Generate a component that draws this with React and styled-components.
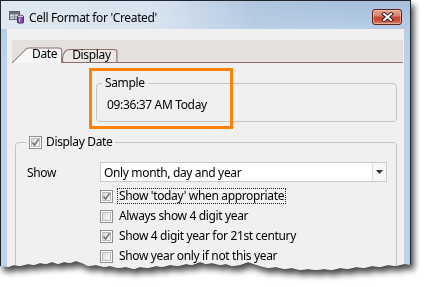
import React from 'react';
import styled, { createGlobalStyle } from 'styled-components';

const FONT = `"Noto Sans", "Open Sans", sans-serif`;

const Global = createGlobalStyle`
  html, body { margin: 0; padding: 0; background: #fff; }
  body { font-family: ${FONT}; font-size: 12px; color: #111; letter-spacing: -0.35px; }
`;

const Stage = styled.div`
  width: 426px;
  height: 287px;
  overflow: hidden;
  background: #fff;
`;

const Shadow = styled.div`
  width: 411px;
  filter: drop-shadow(3px 5px 3px rgba(0, 0, 0, 0.72));
`;

const TORN = [
  [0, 266], [8, 267], [14, 265], [20, 266], [28, 264], [34, 265], [40, 263], [46, 264],
  [52, 262], [58, 264], [64, 262], [70, 263], [76, 261], [82, 263], [88, 266], [96, 265],
  [104, 267], [110, 266], [118, 268], [126, 267], [134, 269], [140, 267], [148, 268],
  [156, 266], [162, 267], [170, 265], [178, 266], [186, 264], [192, 265], [200, 262],
  [206, 264], [212, 263], [220, 265], [226, 264], [232, 266], [240, 265], [248, 262],
  [254, 264], [260, 266], [268, 268], [276, 267], [284, 269], [292, 268], [300, 270],
  [308, 269], [316, 270], [324, 269], [332, 270], [340, 268], [348, 269], [356, 267],
  [364, 268], [372, 266], [380, 267], [388, 265], [396, 266], [404, 264], [411, 265],
];
const tornPath = `polygon(0 0, 411px 0, ${TORN.slice().reverse().map(([x, y]) => `${x}px ${y}px`).join(', ')})`;

const Frame = styled.div`
  height: 272px;
  box-sizing: border-box;
  border: 1px solid #1f262f;
  background: linear-gradient(180deg, #a6bfdb 0px, #b7cde6 28px, #bdd2ea 60px, #bed3eb 100%);
  display: flex;
  flex-direction: column;
`;

const TitleBar = styled.div`
  height: 28px;
  box-sizing: border-box;
  padding: 4px 8px 0 8px;
  display: flex;
  align-items: center;
  background: linear-gradient(90deg, rgba(226, 234, 243, 0.95) 0%, rgba(220, 230, 241, 0.9) 38%, rgba(190, 208, 228, 0.4) 62%, rgba(160, 188, 218, 0) 85%);
`;

const TitleIcon = styled.svg`
  width: 16px;
  height: 14px;
  flex: none;
  margin-right: 4px;
`;

const TitleText = styled.span`
  font-size: 12px;
  color: #000;
  white-space: nowrap;
`;

const CloseBtn = styled.div`
  margin-left: auto;
  width: 30px;
  height: 16px;
  box-sizing: border-box;
  border: 1px solid #5e2218;
  border-radius: 3px;
  background: linear-gradient(180deg, #e6a593 0%, #d98470 40%, #c44a33 52%, #c8513a 75%, #dc8a6c 100%);
  box-shadow: inset 0 0 0 1px rgba(255, 220, 210, 0.45);
  display: flex;
  align-items: center;
  justify-content: center;
`;

const Client = styled.div`
  flex: 1;
  margin: 0 6px;
  background: #f0f0f0;
  padding: 11px 1px 0 5px;
  display: flex;
  flex-direction: column;
  min-height: 0;
`;

const TabStrip = styled.div`
  height: 23px;
  box-sizing: border-box;
  background: #e4e0de;
  border-bottom: 1px solid #8d706a;
  display: flex;
  align-items: flex-end;
`;

const TabItem = styled.div`
  position: relative;
  z-index: ${(p) => (p.$active ? 2 : 1)};
  height: ${(p) => (p.$active ? 15 : 13)}px;
  margin-bottom: ${(p) => (p.$active ? -1 : 0)}px;
  box-sizing: border-box;
  padding: ${(p) => (p.$active ? '0 5px 0 20px' : '0 7px 0 10px')};
  line-height: 12px;
  font-size: 12px;
  color: #000;
`;

const TabShape = styled.svg`
  position: absolute;
  left: 0;
  top: 0;
  width: 100%;
  height: 100%;
  overflow: visible;
  z-index: -1;
`;

const TabLabel = styled.span`
  position: relative;
`;

const TabBody = styled.div`
  position: relative;
  flex: 1;
  display: flex;
  flex-direction: column;
  padding-top: 13px;
`;

const Group = styled.fieldset`
  margin: 0 6px 0 ${(p) => p.$left}px;
  border: 1px solid #c4c4c4;
  border-radius: 4px;
  padding: ${(p) => p.$pad};
  min-width: 0;
`;

const Legend = styled.legend`
  padding: 0 3px;
  line-height: 14px;
  height: 14px;
  display: flex;
  align-items: center;
  gap: 4px;
  color: #000;
`;

const SampleText = styled.div`
  line-height: 14px;
  padding-left: 5px;
  color: #000;
`;

const ShowRow = styled.div`
  display: flex;
  align-items: center;
  height: 20px;
`;

const FieldLabel = styled.span`
  width: 73px;
  flex: none;
  color: #000;
`;

const Select = styled.div`
  width: 287px;
  height: 20px;
  box-sizing: border-box;
  border: 1px solid #cbcbcb;
  background: #fff;
  display: flex;
  align-items: center;
`;

const SelectValue = styled.span`
  flex: 1;
  padding-left: 3px;
  color: #000;
`;

const SelectButton = styled.div`
  width: 13px;
  height: 100%;
  border-left: 1px solid #e2e2e2;
  background: #f7f7f7;
  display: flex;
  align-items: center;
  justify-content: center;
`;

const Options = styled.div`
  display: flex;
  flex-direction: column;
  padding: 4px 0 0 73px;
`;

const OptionRow = styled.div`
  height: 20px;
  display: flex;
  align-items: center;
  gap: 4px;
`;

const OptionText = styled.span`
  line-height: 14px;
  padding: 0 1px;
  border: 1px dotted ${(p) => (p.$focus ? '#222' : 'transparent')};
  color: #000;
`;

const Box = styled.span`
  width: 13px;
  height: 13px;
  flex: none;
  box-sizing: border-box;
  border: 1px solid #8e8f8f;
  background: #fbfbfb;
  padding: 1px;
  display: inline-flex;
`;

const BoxInner = styled.span`
  flex: 1;
  background: linear-gradient(135deg, #d6d8da 0%, #eceded 55%, #f7f7f7 100%);
  border: 1px solid #b9bbbd;
  display: flex;
  align-items: center;
  justify-content: center;
`;

const Highlight = styled.div`
  position: absolute;
  left: 77px;
  top: 5px;
  width: 144px;
  height: 61px;
  box-sizing: border-box;
  border: 3px solid #fd8106;
  pointer-events: none;
`;

function Check({ checked }) {
  return (
    <Box>
      <BoxInner>
        {checked && (
          <svg width="9" height="9" viewBox="0 0 9 9" style={{ margin: -2 }}>
            <path d="M1.5 4.5 L3.6 7 L7.6 1.4" fill="none" stroke="#6e6e6e" strokeWidth="1.6" />
          </svg>
        )}
      </BoxInner>
    </Box>
  );
}

function AppIcon() {
  return (
    <TitleIcon viewBox="0 0 16 14">
      <rect x="0.5" y="1.5" width="10" height="8" fill="#dcdcdc" stroke="#5f6166" />
      <rect x="1" y="2" width="9" height="2.5" fill="#6d7076" />
      <path d="M5.5 4.5v5M1 7h9" stroke="#7d8086" strokeWidth="1" />
      <rect x="8.5" y="6" width="6" height="7" rx="1" fill="#7f4fb3" stroke="#4a2a72" />
      <ellipse cx="11.5" cy="6.5" rx="3" ry="1.4" fill="#d8c4ef" stroke="#4a2a72" strokeWidth="0.8" />
      <rect x="10" y="8" width="1.3" height="4" fill="#c9b2e6" />
    </TitleIcon>
  );
}

export default function App() {
  return (
    <Stage>
      <Global />
      <Shadow>
        <Frame style={{ clipPath: tornPath }}>
          <TitleBar>
            <AppIcon />
            <TitleText>Cell Format for 'Created'</TitleText>
            <CloseBtn>
              <svg width="13" height="10" viewBox="0 0 13 10">
                <path d="M3 2 L10 8 M10 2 L3 8" stroke="#3b1c17" strokeWidth="4" strokeLinecap="square" />
                <path d="M3 2 L10 8 M10 2 L3 8" stroke="#fff" strokeWidth="2" strokeLinecap="square" />
              </svg>
            </CloseBtn>
          </TitleBar>
          <Client>
            <TabStrip>
              <TabItem $active>
                <TabShape viewBox="0 0 48 15" preserveAspectRatio="none">
                  <path d="M0 15 L13.5 1 Q14.5 0 16 0 L45 0 Q47.5 0 47.5 2.5 L47.5 15" fill="#f7f7f7" stroke="#8d706a" strokeWidth="1" />
                </TabShape>
                <TabLabel>Date</TabLabel>
              </TabItem>
              <TabItem>
                <TabShape viewBox="0 0 49 13" preserveAspectRatio="none">
                  <path d="M0.5 13 L0.5 9 Q1.5 0.5 7 0.5 L46 0.5 Q48.5 0.5 48.5 3 L48.5 13" fill="#ebe7e5" stroke="#8d706a" strokeWidth="1" />
                </TabShape>
                <TabLabel>Display</TabLabel>
              </TabItem>
            </TabStrip>
            <TabBody>
              <Group $left={84} $pad="8px 0 9px 5px">
                <Legend>Sample</Legend>
                <SampleText>09:36:37 AM Today</SampleText>
              </Group>
              <Group $left={3} $pad="13px 9px 0 11px" style={{ marginTop: 13, flex: 1 }}>
                <Legend style={{ paddingLeft: 2 }}>
                  <Check checked />
                  <span>Display Date</span>
                </Legend>
                <ShowRow>
                  <FieldLabel>Show</FieldLabel>
                  <Select>
                    <SelectValue>Only month, day and year</SelectValue>
                    <SelectButton>
                      <svg width="7" height="4" viewBox="0 0 7 4">
                        <path d="M0 0 H7 L3.5 4 Z" fill="#333" />
                      </svg>
                    </SelectButton>
                  </Select>
                </ShowRow>
                <Options>
                  <OptionRow>
                    <Check checked />
                    <OptionText $focus>Show 'today' when appropriate</OptionText>
                  </OptionRow>
                  <OptionRow>
                    <Check />
                    <OptionText>Always show 4 digit year</OptionText>
                  </OptionRow>
                  <OptionRow>
                    <Check checked />
                    <OptionText>Show 4 digit year for 21st century</OptionText>
                  </OptionRow>
                  <OptionRow>
                    <Check />
                    <OptionText>Show year only if not this year</OptionText>
                  </OptionRow>
                </Options>
              </Group>
              <Highlight />
            </TabBody>
          </Client>
        </Frame>
      </Shadow>
    </Stage>
  );
}
